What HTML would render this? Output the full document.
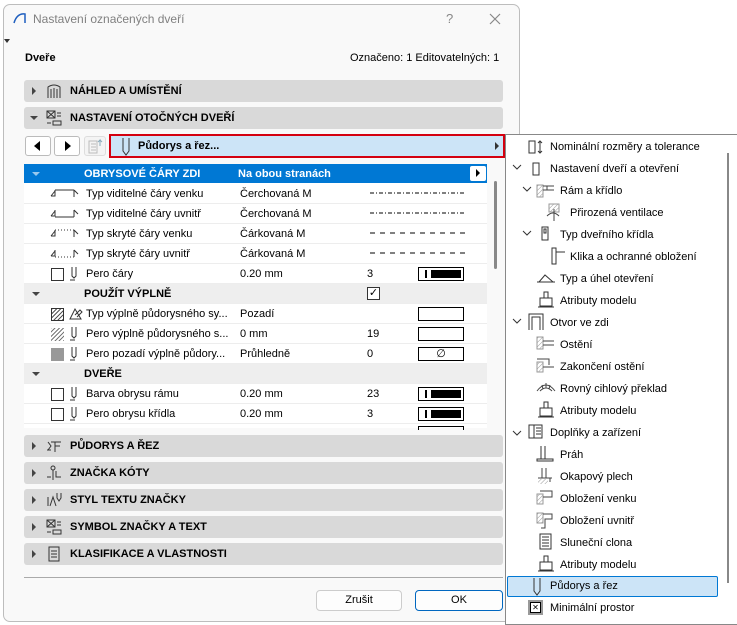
<!DOCTYPE html>
<html><head><meta charset="utf-8"><style>
*{box-sizing:border-box;margin:0;padding:0}
body{width:737px;height:625px;background:#fff;font-family:"Liberation Sans","DejaVu Sans",sans-serif;font-size:11px;color:#000;position:relative;overflow:hidden}
.a{position:absolute}
#dlg{left:3px;top:4px;width:517px;height:618px;background:#f9f9f9;border:1px solid #bdbdbd;border-radius:7px}
.sec{position:absolute;left:24px;width:479px;height:22px;background:#d9d9d9;border-radius:3px;font-weight:bold;font-size:11px}
.sec .t{position:absolute;left:46px;top:5px}
.sec .tri{position:absolute;left:8px;top:7px;width:0;height:0;border-left:4px solid #444;border-top:4px solid transparent;border-bottom:4px solid transparent}
.sec .trid{position:absolute;left:6px;top:9px;border-top:4px solid #444;border-left:4px solid transparent;border-right:4px solid transparent}
.sec svg{position:absolute;left:22px;top:3px}
.row{position:absolute;left:24px;width:463px;height:20px;border-bottom:1px solid #ededed;background:#fff}
.row span{position:absolute;top:4px}
.row svg{position:absolute;top:2px}
.grp{background:#eeeeee;font-weight:bold}
.pen{position:absolute;left:394px;top:3px;width:46px;height:14px;border:1px solid #000;background:#fff}
.pen i{position:absolute;left:6px;top:2px;width:2px;height:8px;background:#000}
.pen b{position:absolute;left:12px;top:2px;width:30px;height:8px;background:#000}
.ic{position:absolute;left:27px;top:4px;width:13px;height:13px;border:1px solid #333}
.pi{position:absolute;left:534px;width:18px;height:18px}
.pi2{left:538px}
</style></head><body>
<div id="dlg" class="a"></div>
<svg class="a" style="left:13px;top:12px" width="14" height="12"><path d="M1 11 Q4 1 12 2 L12 11" fill="none" stroke="#1f5fbf" stroke-width="1.5"/></svg>
<div class="a" style="left:33px;top:12px;font-size:12px;color:#808080">Nastavení označených dveří</div>
<div class="a" style="left:446px;top:11px;font-size:13px;color:#888">?</div>
<svg class="a" style="left:489px;top:13px" width="12" height="12"><path d="M1 1L11 11M11 1L1 11" stroke="#888" stroke-width="1.2"/></svg>
<div class="a" style="left:4px;top:39px;border-top:4px solid #333;border-left:3px solid transparent;border-right:3px solid transparent"></div>
<div class="a" style="left:25px;top:52px;font-weight:bold">Dveře</div>
<div class="a" style="left:350px;top:52px">Označeno: 1 Editovatelných: 1</div>

<div class="sec" style="top:80px"><div class="tri"></div><svg width="16" height="16"><path d="M2 15V4Q8 0 14 4V15M5 15V6M11 15V6M8 15V5" fill="none" stroke="#333"/></svg><div class="t">NÁHLED A UMÍSTĚNÍ</div></div>
<div class="sec" style="top:107px"><div class="trid"></div><svg width="16" height="16"><rect x="1" y="1" width="8" height="7" fill="none" stroke="#333"/><path d="M1 1L9 8M9 1L1 8M11 3h4M11 6h4M7 11h8v4H7zM1 13h4" stroke="#333" fill="none"/></svg><div class="t">NASTAVENÍ OTOČNÝCH DVEŘÍ</div></div>

<div class="a" style="left:25px;top:136px;width:26px;height:20px;border:1px solid #bbb;border-radius:3px;background:#fff"><div class="a" style="left:8px;top:4px;border-right:6px solid #000;border-top:5px solid transparent;border-bottom:5px solid transparent"></div></div>
<div class="a" style="left:54px;top:136px;width:26px;height:20px;border:1px solid #bbb;border-radius:3px;background:#fff"><div class="a" style="left:10px;top:4px;border-left:6px solid #000;border-top:5px solid transparent;border-bottom:5px solid transparent"></div></div>
<div class="a" style="left:84px;top:136px;width:22px;height:20px;border:1px solid #ddd;border-radius:3px;background:#f4f4f4"><svg width="20" height="18"><path d="M4 4h8v12H4zM6 7h5M6 10h5M6 13h5" stroke="#bbb" fill="none"/><path d="M15 9V3l-2 2M15 3l2 2" stroke="#8ab" fill="none"/></svg></div>
<div class="a" style="left:109px;top:134px;width:396px;height:24px;border:2px solid #d4000f;background:#cce4f7"><svg class="a" style="left:10px;top:1px" width="10" height="20"><path d="M2 1V14L5 18L8 14V1" fill="none" stroke="#333"/></svg><div class="a" style="left:27px;top:4px;font-weight:bold">Půdorys a řez...</div><div class="a" style="left:384px;top:6px;border-left:4px solid #333;border-top:4px solid transparent;border-bottom:4px solid transparent"></div></div>

<div class="a" style="left:24px;top:164px;width:463px;height:264px;background:#fff"></div>
<div class="row" style="top:164px;height:19px;background:#0078d4;color:#fff;font-weight:bold;border:none"><div class="a" style="left:8px;top:8px;border-top:4px solid #fff;border-left:4px solid transparent;border-right:4px solid transparent;opacity:.6"></div><span style="left:60px">OBRYSOVÉ ČÁRY ZDI</span><span style="left:214px">Na obou stranách</span><div class="a" style="left:446px;top:2px;width:16px;height:15px;background:#fff;border-radius:2px"><div class="a" style="left:6px;top:3px;border-left:4px solid #000;border-top:4px solid transparent;border-bottom:4px solid transparent"></div></div></div>
<div class="row" style="top:184px"><svg style="left:26px" width="30" height="14"><path d="M1 10h4V4M1 10l4-5M24 4v7M24 4l4 4" stroke="#333" fill="none"/><path d="M5 4h19" stroke="#333"/></svg><span style="left:62px">Typ viditelné čáry venku</span><span style="left:216px">Čerchovaná M</span><svg style="left:346px;top:8px" width="96" height="3"><path d="M0 1H96" stroke="#000" stroke-dasharray="4 2 1 2"/></svg></div>
<div class="row" style="top:204px"><svg style="left:26px" width="30" height="14"><path d="M1 10h4V4M1 10l4-5M24 4v7M24 4l4 4" stroke="#333" fill="none"/><path d="M5 11h19" stroke="#333"/></svg><span style="left:62px">Typ viditelné čáry uvnitř</span><span style="left:216px">Čerchovaná M</span><svg style="left:346px;top:8px" width="96" height="3"><path d="M0 1H96" stroke="#000" stroke-dasharray="4 2 1 2"/></svg></div>
<div class="row" style="top:224px"><svg style="left:26px" width="30" height="14"><path d="M1 10h4V4M1 10l4-5M24 4v7M24 4l4 4" stroke="#333" fill="none"/><path d="M5 4h19" stroke="#333" stroke-dasharray="1 2"/></svg><span style="left:62px">Typ skryté čáry venku</span><span style="left:216px">Čárkovaná M</span><svg style="left:346px;top:8px" width="96" height="3"><path d="M0 1H96" stroke="#000" stroke-dasharray="5 5"/></svg></div>
<div class="row" style="top:244px"><svg style="left:26px" width="30" height="14"><path d="M1 10h4V4M1 10l4-5M24 4v7M24 4l4 4" stroke="#333" fill="none"/><path d="M5 11h19" stroke="#333" stroke-dasharray="1 2"/></svg><span style="left:62px">Typ skryté čáry uvnitř</span><span style="left:216px">Čárkovaná M</span><svg style="left:346px;top:8px" width="96" height="3"><path d="M0 1H96" stroke="#000" stroke-dasharray="5 5"/></svg></div>
<div class="row" style="top:264px"><div class="ic"></div><svg style="left:45px" width="12" height="16"><path d="M3 1V10L5 12L7 10V1M1 14h5" stroke="#333" fill="none"/></svg><span style="left:62px">Pero čáry</span><span style="left:216px">0.20 mm</span><span style="left:343px">3</span><div class="pen"><i></i><b></b></div></div>
<div class="row grp" style="top:284px"><div class="a" style="left:8px;top:8px;border-top:4px solid #444;border-left:4px solid transparent;border-right:4px solid transparent"></div><span style="left:60px">POUŽÍT VÝPLNĚ</span><div class="a" style="left:343px;top:3px;width:13px;height:13px;border:1px solid #333;background:#fff;font-size:11px;line-height:11px;text-align:center">✓</div></div>
<div class="row" style="top:304px"><div class="ic" style="background:repeating-linear-gradient(-45deg,#555 0 1px,#fff 1px 3px)"></div><svg style="left:45px;top:3px" width="14" height="14"><path d="M1 12L6 2 12 12zM6 8l5-5 2 2-5 5" stroke="#333" fill="#fff"/></svg><span style="left:62px">Typ výplně půdorysného sy...</span><span style="left:216px">Pozadí</span><div class="pen"></div></div>
<div class="row" style="top:324px"><div class="ic" style="border:none;background:repeating-linear-gradient(-45deg,#777 0 1px,#fff 1px 3px)"></div><svg style="left:45px" width="12" height="16"><path d="M3 1V10L5 12L7 10V1M1 14h5" stroke="#333" fill="none"/></svg><span style="left:62px">Pero výplně půdorysného s...</span><span style="left:216px">0 mm</span><span style="left:343px">19</span><div class="pen"></div></div>
<div class="row" style="top:344px"><div class="ic" style="border:none;background:#999"></div><svg style="left:45px" width="12" height="16"><path d="M3 1V10L5 12L7 10V1M1 14h5" stroke="#333" fill="none"/></svg><span style="left:62px">Pero pozadí výplně půdory...</span><span style="left:216px">Průhledně</span><span style="left:343px">0</span><div class="pen" style="text-align:center;line-height:12px">∅</div></div>
<div class="row grp" style="top:364px"><div class="a" style="left:8px;top:8px;border-top:4px solid #444;border-left:4px solid transparent;border-right:4px solid transparent"></div><span style="left:60px">DVEŘE</span></div>
<div class="row" style="top:384px"><div class="ic"></div><svg style="left:45px" width="12" height="16"><path d="M3 1V10L5 12L7 10V1M1 14h5" stroke="#333" fill="none"/></svg><span style="left:62px">Barva obrysu rámu</span><span style="left:216px">0.20 mm</span><span style="left:343px">23</span><div class="pen"><i></i><b></b></div></div>
<div class="row" style="top:404px"><div class="ic"></div><svg style="left:45px" width="12" height="16"><path d="M3 1V10L5 12L7 10V1M1 14h5" stroke="#333" fill="none"/></svg><span style="left:62px">Pero obrysu křídla</span><span style="left:216px">0.20 mm</span><span style="left:343px">3</span><div class="pen"><i></i><b></b></div></div>
<div class="row" style="top:424px;height:4px;border:none"><div class="a" style="left:394px;top:2px;width:46px;height:4px;border:1px solid #000;border-bottom:none"></div></div>
<div class="a" style="left:494px;top:181px;width:3px;height:88px;background:#888;border-radius:2px"></div>

<div class="sec" style="top:435px"><div class="tri"></div><svg width="16" height="16"><path d="M1 12h4M5 4h10M9 4v10M9 8h5M2 4l3 4-3 4" stroke="#333" fill="none"/></svg><div class="t">PŮDORYS A ŘEZ</div></div>
<div class="sec" style="top:462px"><div class="tri"></div><svg width="16" height="16"><circle cx="7" cy="3" r="2" fill="none" stroke="#333"/><path d="M1 12h4M7 5v10M10 6v6h5" stroke="#333" fill="none"/></svg><div class="t">ZNAČKA KÓTY</div></div>
<div class="sec" style="top:489px"><div class="tri"></div><svg width="16" height="16"><path d="M2 5v9M4 14l3-9 3 9M11 1v5l2 3 2-3V1" stroke="#333" fill="none"/></svg><div class="t">STYL TEXTU ZNAČKY</div></div>
<div class="sec" style="top:516px"><div class="tri"></div><svg width="16" height="16"><rect x="1" y="1" width="8" height="7" fill="none" stroke="#333"/><path d="M1 1L9 8M9 1L1 8M11 3h4M11 6h4M7 11h8v4H7zM1 13h4" stroke="#333" fill="none"/></svg><div class="t">SYMBOL ZNAČKY A TEXT</div></div>
<div class="sec" style="top:543px"><div class="tri"></div><svg width="16" height="16"><path d="M3 1h10v14H3zM5 5h6M5 8h6M5 11h6" stroke="#333" fill="none"/></svg><div class="t">KLASIFIKACE A VLASTNOSTI</div></div>

<div class="a" style="left:24px;top:577px;width:479px;height:1px;background:#aaa"></div>
<div class="a" style="left:316px;top:590px;width:86px;height:21px;border:1px solid #ccc;border-radius:4px;background:#fdfdfd;text-align:center;line-height:19px">Zrušit</div>
<div class="a" style="left:415px;top:590px;width:88px;height:21px;border:1px solid #0067c0;border-radius:4px;background:#fdfdfd;text-align:center;line-height:19px">OK</div>

<div class="a" style="left:505px;top:134px;width:232px;height:491px;background:#fff;border:1px solid #888;border-right:none"></div>
<div class="a" style="left:727px;top:153px;width:2px;height:430px;background:#888"></div>
<div class="a" style="left:507px;top:576px;width:211px;height:21px;background:#cce4f7;border:1px solid #0078d4;border-radius:2px"></div>

<svg class="a" style="left:528px;top:139px" width="18" height="16"><rect x="1" y="2" width="6" height="12" fill="none" stroke="#333"/><path d="M12 2v12M10 4l2-2 2 2M10 12l2 2 2-2" stroke="#333" fill="none"/></svg><div class="a" style="left:550px;top:141px">Nominální rozměry a tolerance</div>
<svg class="a" style="left:512px;top:163px" width="10" height="8"><path d="M1 2l4 4 4-4" stroke="#333" fill="none"/></svg><svg class="a" style="left:532px;top:161px" width="10" height="16"><rect x="1" y="2" width="6" height="12" fill="none" stroke="#333"/></svg><div class="a" style="left:550px;top:163px">Nastavení dveří a otevření</div>
<svg class="a" style="left:522px;top:185px" width="10" height="8"><path d="M1 2l4 4 4-4" stroke="#333" fill="none"/></svg><svg class="a" style="left:536px;top:183px" width="20" height="16"><rect x="1" y="2" width="6" height="12" fill="url(#h)" stroke="#999"/><path d="M7 3h11M7 7h11M11 3v4" stroke="#444" fill="none"/><defs><pattern id="h" width="3" height="3" patternUnits="userSpaceOnUse" patternTransform="rotate(45)"><path d="M0 0v3" stroke="#999"/></pattern></defs></svg><div class="a" style="left:560px;top:185px">Rám a křídlo</div>
<svg class="a" style="left:546px;top:203px" width="20" height="18"><rect x="3" y="1" width="10" height="8" fill="url(#h)" stroke="#999"/><path d="M1 13q6-6 12 0M8 6v12" stroke="#444" fill="none"/></svg><div class="a" style="left:570px;top:207px">Přirozená ventilace</div>
<svg class="a" style="left:522px;top:229px" width="10" height="8"><path d="M1 2l4 4 4-4" stroke="#333" fill="none"/></svg><svg class="a" style="left:541px;top:226px" width="10" height="16"><rect x="1" y="1" width="6" height="13" fill="none" stroke="#333"/><rect x="3" y="3" width="2" height="4" fill="none" stroke="#333"/></svg><div class="a" style="left:560px;top:229px">Typ dveřního křídla</div>
<svg class="a" style="left:549px;top:247px" width="18" height="18"><path d="M3 1h4v16H3zM7 5h9" stroke="#333" fill="none"/></svg><div class="a" style="left:570px;top:251px">Klika a ochranné obložení</div>
<svg class="a" style="left:536px;top:271px" width="20" height="14"><path d="M1 11h18M3 11l6-7 8 7" stroke="#333" fill="none"/></svg><div class="a" style="left:560px;top:273px">Typ a úhel otevření</div>
<svg class="a pu" style="left:537px;top:291px" width="18" height="18"><path d="M7 1h4v6H7zM3 7h12v8H3zM1 16h16" stroke="#333" fill="none"/></svg><div class="a" style="left:560px;top:295px">Atributy modelu</div>
<svg class="a" style="left:512px;top:317px" width="10" height="8"><path d="M1 2l4 4 4-4" stroke="#333" fill="none"/></svg><svg class="a" style="left:528px;top:313px" width="16" height="18"><path d="M1 17V1h14v16M4 17V4h8v13" stroke="#333" fill="none"/></svg><div class="a" style="left:550px;top:317px">Otvor ve zdi</div>
<svg class="a" style="left:536px;top:335px" width="20" height="16"><rect x="1" y="2" width="6" height="12" fill="url(#h)" stroke="#999"/><path d="M7 6h11M7 10h11" stroke="#444" fill="none"/></svg><div class="a" style="left:560px;top:339px">Ostění</div>
<svg class="a" style="left:536px;top:357px" width="20" height="16"><rect x="1" y="5" width="6" height="10" fill="url(#h)" stroke="#999"/><path d="M1 2h12v6M7 10h11" stroke="#444" fill="none"/></svg><div class="a" style="left:560px;top:361px">Zakončení ostění</div>
<svg class="a" style="left:536px;top:381px" width="20" height="12"><path d="M1 10q9-12 18 0M4 10q6-6 12 0M6 4l1 4M10 2v5M14 4l-1 4" stroke="#444" fill="none"/></svg><div class="a" style="left:560px;top:383px">Rovný cihlový překlad</div>
<svg class="a" style="left:537px;top:401px" width="18" height="18"><path d="M7 1h4v6H7zM3 7h12v8H3zM1 16h16" stroke="#333" fill="none"/></svg><div class="a" style="left:560px;top:405px">Atributy modelu</div>
<svg class="a" style="left:512px;top:429px" width="10" height="8"><path d="M1 2l4 4 4-4" stroke="#333" fill="none"/></svg><svg class="a" style="left:528px;top:424px" width="16" height="16"><rect x="1" y="1" width="13" height="13" fill="none" stroke="#333"/><path d="M6 1v13M8 4h5M8 7h5M8 10h5" stroke="#333"/></svg><div class="a" style="left:550px;top:427px">Doplňky a zařízení</div>
<svg class="a" style="left:536px;top:445px" width="20" height="18"><path d="M5 1v13M9 1v13M1 14h16v2H1z" stroke="#333" fill="none"/></svg><div class="a" style="left:560px;top:449px">Práh</div>
<svg class="a" style="left:536px;top:467px" width="20" height="18"><path d="M6 1v10M10 1v10M2 11h14M14 11v4" stroke="#444" fill="none"/><rect x="2" y="12" width="10" height="5" fill="url(#h)"/></svg><div class="a" style="left:560px;top:471px">Okapový plech</div>
<svg class="a" style="left:536px;top:489px" width="20" height="16"><rect x="1" y="5" width="6" height="10" fill="url(#h)" stroke="#999"/><path d="M4 2h12v6H7" stroke="#444" fill="none"/></svg><div class="a" style="left:560px;top:493px">Obložení venku</div>
<svg class="a" style="left:536px;top:511px" width="20" height="18"><rect x="1" y="2" width="6" height="10" fill="url(#h)" stroke="#999"/><path d="M7 3h9v5H9v9H5" stroke="#444" fill="none"/></svg><div class="a" style="left:560px;top:515px">Obložení uvnitř</div>
<svg class="a" style="left:538px;top:533px" width="16" height="18"><rect x="2" y="1" width="11" height="15" fill="none" stroke="#333"/><path d="M4 4h7M4 7h7M4 10h7M4 13h7" stroke="#333"/></svg><div class="a" style="left:560px;top:537px">Sluneční clona</div>
<svg class="a" style="left:537px;top:555px" width="18" height="18"><path d="M7 1h4v6H7zM3 7h12v8H3zM1 16h16" stroke="#333" fill="none"/></svg><div class="a" style="left:560px;top:559px">Atributy modelu</div>
<svg class="a" style="left:532px;top:577px" width="10" height="20"><path d="M2 1V14L5 18L8 14V1" fill="none" stroke="#333"/></svg><div class="a" style="left:550px;top:580px">Půdorys a řez</div>
<div class="a" style="left:528px;top:600px;width:15px;height:15px;background:#999;padding:2px"><div style="width:11px;height:11px;background:#fff;border:1px solid #000;font-size:8px;line-height:9px;text-align:center">✕</div></div><div class="a" style="left:550px;top:602px">Minimální prostor</div>
</body></html>
